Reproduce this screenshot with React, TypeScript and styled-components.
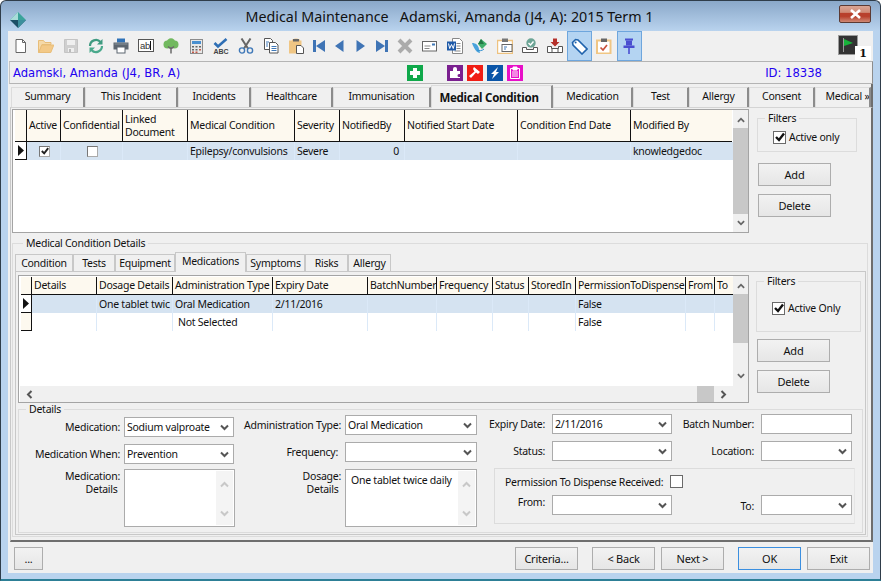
import React from 'react';
import styled, { createGlobalStyle } from 'styled-components';

const GlobalStyle = createGlobalStyle`
  html, body { margin: 0; padding: 0; background: #fff; }
  body { font-family: "Noto Sans", "Liberation Sans", sans-serif; font-size: 10.5px; letter-spacing: -0.25px; color: #111; }
  * { box-sizing: border-box; }
`;

const Window = styled.div`
  width: 881px;
  height: 581px;
  display: flex;
  flex-direction: column;
  border: 1px solid #2f3d4a;
  border-bottom: 2px solid #2d7f96;
  border-radius: 6px 6px 0 0;
  background: linear-gradient(#8aa8c9 0, #b9d3ee 30px, #b9d3ee 100%);
`;
const TitleBar = styled.div`
  height: 30px;
  flex: none;
  display: flex;
  align-items: center;
  padding: 0 9px;
`;
const Title = styled.div`
  flex: 1;
  text-align: center;
  padding-left: 34px;
  font-size: 14.3px;
  letter-spacing: 0;
  white-space: pre;
  color: #111;
`;
const CloseButton = styled.div`
  width: 32px;
  height: 18px;
  margin-top: -4px;
  border: 1px solid #5c3a33;
  border-radius: 2px;
  display: flex;
  align-items: center;
  justify-content: center;
  background: linear-gradient(#d9a594 0, #cf8a76 40%, #b8402c 45%, #b8402c 65%, #cf8a76 100%);
`;
const Client = styled.div`
  flex: 1;
  margin: 0 7px 6px;
  background: #f0f0f0;
  display: flex;
  flex-direction: column;
  min-height: 0;
`;

const Toolbar = styled.div`
  height: 30px;
  flex: none;
  display: flex;
  padding-left: 1px;
`;
const ToolButton = styled.div<{ $w?: number; $active?: boolean }>`
  width: ${(p) => p.$w ?? 25}px;
  display: flex;
  align-items: center;
  justify-content: center;
  border: 1px solid ${(p) => (p.$active ? '#6ea6dd' : 'transparent')};
  background: ${(p) => (p.$active ? '#b4d4f2' : 'transparent')};
`;
const FlagWrap = styled.div`
  position: relative;
  width: 20px;
  height: 20px;
  margin: 4px 15px 0 196px;
`;
const CountBadge = styled.div`
  position: absolute;
  left: 17px;
  top: 11px;
  width: 16px;
  height: 14px;
  background: #fff;
  font: bold 11px "DejaVu Serif", serif;
  text-align: center;
  line-height: 15px;
`;

const PatientBar = styled.div`
  height: 23px;
  flex: none;
  margin-left: 1px;
  display: flex;
  align-items: center;
  border-top: 1px solid #b4b4b4;
  border-bottom: 1px solid #b4b4b4;
  border-left: 1px solid #c4c4c4;
  border-right: 1px solid #8c8c8c;
  padding-left: 3px;
  font-family: "DejaVu Sans", sans-serif;
  font-size: 11.6px;
  letter-spacing: 0;
  color: #2200f0;
`;
const PatientName = styled.span`
  width: 394px;
`;
const AlertSquare = styled.span<{ $bg: string; $gap: number }>`
  width: 16px;
  height: 16px;
  margin-left: ${(p) => p.$gap}px;
  background: ${(p) => p.$bg};
  display: flex;
`;
const PatientId = styled.span`
  margin-left: auto;
  margin-right: 50px;
`;

const TabStrip = styled.div`
  height: 23px;
  flex: none;
  display: flex;
  align-items: flex-end;
  padding-left: 3px;
  border-right: 2px solid #6e6e6e;
`;
const MainTab = styled.div<{ $w: number; $active?: boolean; $indent?: number }>`
  width: ${(p) => p.$w}px;
  height: ${(p) => (p.$active ? 23 : 20)}px;
  margin-bottom: ${(p) => (p.$active ? -1 : 0)}px;
  position: relative;
  z-index: ${(p) => (p.$active ? 1 : 0)};
  display: flex;
  align-items: center;
  justify-content: center;
  overflow: hidden;
  white-space: nowrap;
  background: #f0f0f0;
  border-top: 1px solid #dcdcdc;
  border-left: 1px solid #dcdcdc;
  border-right: 2px solid #8c8c8c;
  font-size: ${(p) => (p.$active ? 11.5 : 10.5)}px;
  font-weight: ${(p) => (p.$active ? 700 : 400)};
  padding-bottom: ${(p) => (p.$active ? 0 : 3)}px;
  padding-left: ${(p) => p.$indent ?? 0}px;
  padding-right: ${(p) => (p.$active ? 5 : 0)}px;
`;
const MainPanel = styled.div`
  height: 435px;
  flex: none;
  margin-left: 2px;
  padding: 1px 0 0 1px;
  border-top: 1px solid #d4d4d4;
  border-left: 1px solid #c8c8c8;
  border-right: 2px solid #6e6e6e;
  border-bottom: 2px solid #6e6e6e;
`;
const SplitRow = styled.div`
  display: flex;
`;
const GridFrame = styled.div<{ $w: number; $h: number; $left: number }>`
  width: ${(p) => p.$w}px;
  height: ${(p) => p.$h}px;
  margin-left: ${(p) => p.$left}px;
  flex: none;
  display: flex;
  background: #fff;
  border: 1px solid #a4a4a4;
`;
const GridMain = styled.div`
  flex: 1;
  min-width: 0;
  display: flex;
  flex-direction: column;
`;
const GridBody = styled.div<{ $top: number }>`
  flex: 1;
  min-height: 0;
  padding: ${(p) => p.$top}px 0 0 2px;
  overflow: hidden;
`;
const GridRow = styled.div<{ $cols: number[]; $h: number; $selected?: boolean }>`
  display: grid;
  grid-template-columns: ${(p) => p.$cols.map((c) => `${c}px`).join(' ')};
  height: ${(p) => p.$h}px;
  background: ${(p) => (p.$selected ? '#d5e3f1' : 'transparent')};
`;
const HeadCell = styled.div`
  background: #fdf9ef;
  border-right: 1px solid #111;
  border-bottom: 1px solid #111;
  padding-left: 2px;
  display: flex;
  align-items: center;
  line-height: 13px;
  overflow: hidden;
  white-space: pre;
  &:last-child { border-right: none; }
`;
const RowHead = styled.div<{ $cream?: boolean }>`
  background: ${(p) => (p.$cream ? '#fdf9ef' : '#fff')};
  border-right: 1px solid #111;
  border-bottom: 1px solid #111;
  display: flex;
  align-items: center;
  justify-content: center;
`;
const Cell = styled.div<{ $align?: string; $pad?: number }>`
  border-right: 1px solid #dbe9f8;
  padding-left: ${(p) => p.$pad ?? 2}px;
  padding-right: ${(p) => (p.$align === 'right' ? 5 : 0)}px;
  display: flex;
  align-items: center;
  justify-content: ${(p) => (p.$align === 'right' ? 'flex-end' : p.$align === 'center' ? 'center' : 'flex-start')};
  overflow: hidden;
  white-space: nowrap;
  &:last-child { border-right: none; }
`;
const GridCheck = styled.span`
  width: 11px;
  height: 11px;
  background: #fff;
  border: 1px solid #aaa;
  border-top-color: #777;
  border-left-color: #777;
  display: flex;
  align-items: center;
  justify-content: center;
`;
const VScroll = styled.div<{ $thumb: number; $end: number }>`
  width: 15px;
  flex: none;
  display: flex;
  flex-direction: column;
  align-items: center;
  background: #f0f0f0;
  & > i {
    display: block;
    width: 15px;
    height: ${(p) => p.$thumb}px;
    margin-top: 4px;
    background: #c8c8c8;
  }
  & > svg:first-child { margin-top: 6px; }
  & > svg:last-child { margin-top: auto; margin-bottom: ${(p) => p.$end}px; }
`;
const HScroll = styled.div`
  height: 16px;
  flex: none;
  display: flex;
  align-items: center;
  background: #f0f0f0;
  margin-left: 1px;
  padding: 0 5px;
  & > i {
    display: block;
    width: 17px;
    height: 16px;
    margin-left: auto;
    margin-right: 5px;
    background: #c8c8c8;
  }
`;

const SidePane = styled.div<{ $left: number }>`
  margin-left: ${(p) => p.$left}px;
  display: flex;
  flex-direction: column;
`;
const Group = styled.fieldset<{ $w: number; $h: number; $mt?: number }>`
  width: ${(p) => p.$w}px;
  height: ${(p) => p.$h}px;
  margin: ${(p) => p.$mt ?? 0}px 0 0;
  padding: 0;
  border: 1px solid #dcdcdc;
  min-width: 0;
`;
const GroupTitle = styled.legend<{ $left?: number }>`
  padding: 0 3px;
  margin-left: ${(p) => p.$left ?? 7}px;
  line-height: 13px;
`;
const CheckLine = styled.label<{ $left: number; $top: number }>`
  display: flex;
  align-items: center;
  gap: 3px;
  margin: ${(p) => p.$top}px 0 0 ${(p) => p.$left}px;
`;
const BlackCheck = styled.span`
  width: 13px;
  height: 13px;
  background: #fff;
  border: 1px solid #6a6a6a;
  display: flex;
  align-items: center;
  justify-content: center;
`;
const PushButton = styled.div<{ $w?: number; $focus?: boolean }>`
  width: ${(p) => p.$w ?? 73}px;
  height: 23px;
  flex: none;
  display: flex;
  align-items: center;
  justify-content: center;
  border: 1px solid ${(p) => (p.$focus ? '#3b8fe0' : '#adadad')};
  background: linear-gradient(#f2f2f2, #e6e6e6);
  font-size: 11px;
`;
const SideButton = styled(PushButton)<{ $mt: number; $ml?: number }>`
  margin-top: ${(p) => p.$mt}px;
  margin-left: ${(p) => p.$ml ?? 0}px;
`;

const MainGroup = styled.fieldset`
  width: 856px;
  height: 300px;
  margin: 4px 0 0;
  padding: 2px 0 0 2px;
  border: 1px solid #dcdcdc;
  min-width: 0;
`;
const SubStrip = styled.div`
  height: 19px;
  display: flex;
  align-items: flex-end;
`;
const SubTab = styled.div<{ $w: number; $active?: boolean }>`
  width: ${(p) => p.$w}px;
  height: ${(p) => (p.$active ? 20 : 17)}px;
  margin-bottom: ${(p) => (p.$active ? -1 : 0)}px;
  position: relative;
  z-index: ${(p) => (p.$active ? 1 : 0)};
  display: flex;
  align-items: center;
  justify-content: center;
  background: #f0f0f0;
  border: 1px solid #c8c8c8;
  border-bottom: none;
  padding-bottom: ${(p) => (p.$active ? 3 : 0)}px;
`;
const SubPanel = styled.div`
  width: 851px;
  height: 264px;
  border: 1px solid #c8c8c8;
  padding-top: 3px;
`;

const DetailsGroup = styled.fieldset`
  width: 845px;
  height: 129px;
  margin: 1px 0 0 2px;
  padding: 0;
  border: 1px solid #dcdcdc;
  min-width: 0;
  display: flex;
`;
const DetailsLegend = styled.legend`
  padding: 0 3px;
  margin-left: 7px;
  line-height: 11px;
  height: 10px;
`;
const DetailsBody = styled.div`
  display: flex;
  align-items: flex-start;
`;
const Column = styled.div<{ $top: number; $left?: number }>`
  margin: ${(p) => p.$top}px 0 0 ${(p) => p.$left ?? 0}px;
  display: flex;
  flex-direction: column;
`;
const FieldRow = styled.div<{ $mt?: number }>`
  display: flex;
  margin-top: ${(p) => p.$mt ?? 0}px;
`;
const FieldLabel = styled.div<{ $w: number; $gap: number; $inset?: number; $lift?: number; $drop?: number }>`
  width: ${(p) => p.$w}px;
  margin-right: ${(p) => p.$gap}px;
  padding-right: ${(p) => p.$inset ?? 0}px;
  padding-bottom: ${(p) => p.$lift ?? 0}px;
  padding-top: ${(p) => p.$drop ?? 0}px;
  flex: none;
  display: flex;
  align-items: center;
  justify-content: flex-end;
  text-align: right;
  white-space: nowrap;
`;
const MultiLabel = styled(FieldLabel)`
  display: block;
  line-height: 13px;
  padding-top: 1px;
`;
const Combo = styled.div<{ $w: number }>`
  width: ${(p) => p.$w}px;
  height: 20px;
  flex: none;
  display: flex;
  align-items: center;
  justify-content: space-between;
  background: #fff;
  border: 1px solid #ababab;
  padding: 0 4px 0 2px;
`;
const TextBox = styled.div<{ $w: number }>`
  width: ${(p) => p.$w}px;
  height: 20px;
  flex: none;
  background: #fff;
  border: 1px solid #ababab;
`;
const MemoBox = styled.div<{ $w: number }>`
  width: ${(p) => p.$w}px;
  height: 58px;
  flex: none;
  display: flex;
  justify-content: space-between;
  background: #fff;
  border: 1px solid #ababab;
`;
const MemoText = styled.div`
  padding: 3px 0 0 5px;
  white-space: nowrap;
`;
const MemoScroll = styled.div`
  width: 17px;
  flex: none;
  margin: 1px;
  background: #f4f4f4;
  display: flex;
  flex-direction: column;
  justify-content: space-between;
  align-items: center;
  padding: 9px 0 7px;
`;
const PermissionBox = styled.div`
  width: 361px;
  height: 56px;
  margin: 7px 0 0 14px;
  border: 1px solid #dcdcdc;
  border-right-color: #e6e6e6;
`;
const PermissionLine = styled.div`
  display: flex;
  align-items: center;
  gap: 7px;
  padding: 5px 0 0 10px;
  height: 20px;
`;
const PlainCheck = styled.span`
  width: 13px;
  height: 13px;
  background: #fff;
  border: 1px solid #6a6a6a;
`;
const PermissionFields = styled.div`
  display: flex;
  margin-top: 6px;
`;

const Footer = styled.div`
  flex: 1;
  display: flex;
  align-items: flex-start;
  padding: 5px 0 0 6px;
`;
const FooterButton = styled(PushButton)<{ $ml: number }>`
  margin-left: ${(p) => p.$ml}px;
`;

const Chevron = ({ color = '#555', up = false, size = 9 }: { color?: string; up?: boolean; size?: number }) => (
  <svg width={size} height={size} viewBox="0 0 9 9" style={{ flex: 'none' }}>
    <path d={up ? 'M1 6.5 L4.5 3 L8 6.5' : 'M1 2.5 L4.5 6 L8 2.5'} fill="none" stroke={color} strokeWidth="2" />
  </svg>
);
const ChevronSide = ({ left = false }: { left?: boolean }) => (
  <svg width="9" height="9" viewBox="0 0 9 9">
    <path d={left ? 'M6.5 1 L3 4.5 L6.5 8' : 'M2.5 1 L6 4.5 L2.5 8'} fill="none" stroke="#555" strokeWidth="2" />
  </svg>
);
const RowArrow = () => (
  <svg width="6" height="11" viewBox="0 0 6 11">
    <path d="M0 0 L6 5.5 L0 11 Z" fill="#111" />
  </svg>
);
const Tick = ({ size = 9, color = '#222' }: { size?: number; color?: string }) => (
  <svg width={size} height={size} viewBox="0 0 10 10">
    <path d="M1 5 L4 8 L9 1.5" fill="none" stroke={color} strokeWidth="2.4" />
  </svg>
);

const Ico = ({ w = 16, h = 16, children }: { w?: number; h?: number; children: React.ReactNode }) => (
  <svg width={w} height={h} viewBox={`0 0 ${w} ${h}`}>
    {children}
  </svg>
);

const toolIcons: { w?: number; active?: boolean; icon: React.ReactNode }[] = [
  { icon: <Ico><path d="M3 1.5h6.5l3 3v10h-9.5z" fill="#fff" stroke="#666" /><path d="M9.5 1.5v3h3" fill="none" stroke="#666" /></Ico> },
  { icon: <Ico><path d="M0.5 14.5v-12h5l1.5 2h6v2h-9l-3 8z" fill="#f5d9a8" stroke="#e8bd78" /><path d="M0.8 14.5l3-7.5h12l-3 7.5z" fill="#f3c987" stroke="#e8bd78" /></Ico> },
  { icon: <Ico><path d="M1.5 1.5h13v13h-13z" fill="#cfcfcf" stroke="#c4c4c4" /><rect x="4" y="2" width="8" height="5" fill="#efefef" /><rect x="5" y="10" width="6" height="4" fill="#efefef" /><rect x="6" y="11" width="2" height="3" fill="#bbb" /></Ico> },
  { icon: <Ico><path d="M2 8a6 6 0 0 1 10.5-4" fill="none" stroke="#3f9a80" strokeWidth="2.2" /><path d="M14.5 1v5.5h-5.5z" fill="#3f9a80" /><path d="M14 8a6 6 0 0 1-10.5 4" fill="none" stroke="#4aa98c" strokeWidth="2.2" /><path d="M1.5 15v-5.5h5.5z" fill="#4aa98c" /></Ico> },
  { icon: <Ico><rect x="4" y="0.5" width="8" height="4" fill="#2f72b8" /><rect x="0.5" y="4.5" width="15" height="7" fill="#5d6670" /><rect x="1.5" y="5.5" width="13" height="1" fill="#8a939c" /><rect x="4" y="9" width="8" height="6" fill="#fff" stroke="#5d6670" /></Ico> },
  { icon: <Ico h={14}><rect x="0.5" y="0.5" width="15" height="12" fill="#fff" stroke="#555" /><text x="2" y="10" fontSize="9.5" fontFamily="Liberation Sans, sans-serif" fill="#333">ab</text><rect x="12" y="2" width="1" height="9" fill="#111" /></Ico> },
  { icon: <Ico><circle cx="4.5" cy="6.5" r="4" fill="#72b95f" /><circle cx="11.5" cy="6.5" r="4" fill="#72b95f" /><circle cx="8" cy="4.5" r="4.2" fill="#72b95f" /><path d="M8 15.5V9M8 11L5 8.5M8 11l3-2.5" fill="none" stroke="#6a6a6a" strokeWidth="1.5" /></Ico> },
  { icon: <Ico w={13} h={15}><rect x="0.5" y="0.5" width="12" height="14" fill="#e8e8e8" stroke="#8c8c8c" /><rect x="2" y="2" width="9" height="3" fill="#4a90d0" /><path d="M2 7h2v1.5H2zM5.5 7h2v1.5h-2zM9 7h2v1.5H9zM2 10h2v1.5H2zM5.5 10h2v1.5h-2z" fill="#666" /><path d="M9 10h2v1.5H9zM2 12.5h2V14H2zM5.5 12.5h2V14h-2z" fill="#c25a4a" /></Ico> },
  { icon: <Ico h={16}><path d="M1.5 5l3.5 3.5L13.5 1" fill="none" stroke="#2f6fb5" strokeWidth="2.6" /><text x="0.5" y="15.5" fontSize="7" fontWeight="700" letterSpacing="0" fontFamily="Liberation Sans, sans-serif" fill="#444">ABC</text></Ico> },
  { icon: <Ico><path d="M3.5 0.5L10 10.5M12.5 0.5L6 10.5" stroke="#666" strokeWidth="2" fill="none" /><circle cx="4" cy="12.5" r="2.6" fill="none" stroke="#3f78b8" strokeWidth="1.4" /><circle cx="12" cy="12.5" r="2.6" fill="none" stroke="#3f78b8" strokeWidth="1.4" /></Ico> },
  { icon: <Ico><path d="M1.5 0.5h6l2 2v9h-8z" fill="#fff" stroke="#555" /><path d="M6.5 4.5h6l2.5 2.5v8h-8.5z" fill="#fff" stroke="#555" /><path d="M3 4h3M3 6h2M3 8h2M8.5 8.5h5M8.5 10.5h5M8.5 12.5h5" stroke="#3f78b8" /></Ico> },
  { icon: <Ico><path d="M1 2.5h3v-1h1.5a2.5 1 0 0 1 5 0H12v1h1.5V8H8v7.5H1z" fill="#f0c684" /><rect x="5" y="1" width="6" height="2.5" fill="#666" /><path d="M8.5 7.5h4.5l2.5 2.5v5.5h-7z" fill="#fff" stroke="#555" /></Ico> },
  { w: 21, icon: <Ico w={12} h={12}><rect x="0" y="0" width="3" height="12" fill="#3f74b5" /><path d="M12 0v12L3 6z" fill="#3f74b5" /></Ico> },
  { w: 21, icon: <Ico w={9} h={12}><path d="M8.5 0v12L0 6z" fill="#3f74b5" /></Ico> },
  { w: 21, icon: <Ico w={9} h={12}><path d="M0.5 0v12L9 6z" fill="#3f74b5" /></Ico> },
  { w: 21, icon: <Ico w={12} h={12}><rect x="9" y="0" width="3" height="12" fill="#3f74b5" /><path d="M0 0v12l9-6z" fill="#3f74b5" /></Ico> },
  { icon: <Ico><path d="M2 2l12 12M14 2L2 14" stroke="#ababab" strokeWidth="4" /></Ico> },
  { icon: <Ico w={15} h={12}><rect x="0.5" y="1.5" width="14" height="9.5" fill="#fff" stroke="#666" /><path d="M2.5 6h6M2.5 8.5h5" stroke="#888" /><rect x="10" y="3.5" width="3" height="2" fill="#3f78b8" /></Ico> },
  { icon: <Ico><path d="M5.5 0.5h7l3 3v12h-10z" fill="#fff" stroke="#888" /><path d="M9.5 5.5h4M9.5 8h4M9.5 10.5h4M7.5 13h6" stroke="#888" /><rect x="0" y="3.5" width="9" height="9" fill="#1f5aa8" /><path d="M1.5 5.5l1.2 5 1.8-4 1.8 4 1.2-5" fill="none" stroke="#fff" /></Ico> },
  { icon: <Ico><path d="M0 5c4 0 6 2 7 6l1 4c-3 0-6-4-8-10z" fill="#49a2dc" /><path d="M9 1l6 5-5 5-4-5z" fill="#3fae6a" /><path d="M9 1l3 5-6 0z" fill="#237a46" /><path d="M5 12c2 1 5 1 7-1" stroke="#2f8fd0" fill="none" /></Ico> },
  { icon: <Ico><path d="M0.5 2.5h15v13h-15z" fill="#fff" stroke="#eec27f" strokeWidth="1.4" /><rect x="5" y="0.5" width="6" height="3.5" fill="#777" /><rect x="5" y="6.5" width="10" height="7" fill="#fff" stroke="#666" /><path d="M7 9h3M7 11h2" stroke="#3f78b8" /></Ico> },
  { icon: <Ico><circle cx="9" cy="5" r="4.7" fill="#6da596" /><path d="M6.5 5l2 2 3-3.5" fill="none" stroke="#fff" strokeWidth="1.4" /><path d="M0.5 9.5h4v2h7v-2h4v5h-15z" fill="#fff" stroke="#555" /></Ico> },
  { icon: <Ico><path d="M6 0.5h4v3.5h2.5L8 8.5 3.5 4H6z" fill="#b5302a" /><path d="M0.5 8.5h4v2h7v-2h4v6h-15z" fill="#fff" stroke="#555" /><path d="M5 10.5v4M11 10.5v4" stroke="#555" /></Ico> },
  { active: true, icon: <svg width="17" height="17" viewBox="0 0 17 17"><path d="M1.5 4.5l3-3 2.5.5 9 9-5 5-9-9z" fill="#fff" stroke="#1f63ad" strokeWidth="1.6" /><circle cx="4.6" cy="4.6" r="1" fill="#1f63ad" /></svg> },
  { icon: <Ico><rect x="1" y="2.5" width="13.5" height="13" fill="#fff" stroke="#f0c684" strokeWidth="2" /><rect x="5" y="0.5" width="6" height="3.5" fill="#666" /><path d="M4.5 9.5l2.5 2.5 4-5" fill="none" stroke="#c9523b" strokeWidth="1.7" /></Ico> },
  { active: true, icon: <Ico><rect x="4" y="0.5" width="8" height="2" fill="#4a4fd0" /><rect x="5" y="2.5" width="6" height="5" fill="#4a4fd0" /><rect x="2.5" y="7.5" width="11" height="2.5" fill="#4a4fd0" /><rect x="7.2" y="10" width="1.6" height="6" fill="#4a4fd0" /></Ico> },
];

const mainTabs: [string, number][] = [
  ['Summary', 74], ['This Incident', 93], ['Incidents', 73], ['Healthcare', 82], ['Immunisation', 98],
  ['Medical Condition', 122], ['Medication', 80], ['Test', 56], ['Allergy', 60], ['Consent', 66], ['Medical »', 56],
];
const subTabs: [string, number][] = [
  ['Condition', 58], ['Tests', 42], ['Equipment', 60], ['Medications', 71], ['Symptoms', 59], ['Risks', 43], ['Allergy', 43],
];

const upperCols = [12, 34, 62, 65, 107, 45, 65, 113, 113, 101];
const upperHead = ['Active', 'Confidential', 'Linked\nDocument', 'Medical Condition', 'Severity', 'NotifiedBy', 'Notified Start Date', 'Condition End Date', 'Modified By'];
const lowerCols = [11, 65, 76, 100, 95, 69, 56, 36, 47, 110, 29, 18];
const lowerHead = ['Details', 'Dosage Details', 'Administration Type', 'Expiry Date', 'BatchNumber', 'Frequency', 'Status', 'StoredIn', 'PermissionToDispense', 'From', 'To'];
const lowerRows = [
  ['', 'One tablet twic', 'Oral Medication', '2/11/2016', '', '', '', '', 'False', '', ''],
  ['', '', 'Not Selected', '', '', '', '', '', 'False', '', ''],
];

export default function App() {
  return (
    <Window>
      <GlobalStyle />
      <TitleBar>
        <svg width="16" height="16" viewBox="0 0 16 16" style={{ marginTop: 8 }}>
          <path d="M8 0L16 8H0z" fill="#3aa39a" />
          <path d="M8 16L16 8H0z" fill="#1c4f66" />
          <path d="M8 0L0 8h8z" fill="#a8dcd8" />
          <path d="M8 16l8-8H8z" fill="#3c8f9c" />
        </svg>
        <Title>{'Medical Maintenance   Adamski, Amanda (J4, A): 2015 Term 1'}</Title>
        <CloseButton>
          <svg width="13" height="10" viewBox="0 0 13 10">
            <path d="M2 1l9 8M11 1L2 9" stroke="#fff" strokeWidth="2.6" />
          </svg>
        </CloseButton>
      </TitleBar>
      <Client>
        <Toolbar>
          {toolIcons.map((t, i) => (
            <ToolButton key={i} $w={t.w} $active={t.active}>
              {t.icon}
            </ToolButton>
          ))}
          <FlagWrap>
            <svg width="20" height="20" viewBox="0 0 20 20">
              <rect x="0.5" y="0.5" width="19" height="19" fill="#333" stroke="#9c9c9c" />
              <rect x="5" y="3" width="1" height="14" fill="#999" />
              <path d="M6 4l9 4-9 3z" fill="#17b33a" />
            </svg>
            <CountBadge>1</CountBadge>
          </FlagWrap>
        </Toolbar>
        <PatientBar>
          <PatientName>Adamski, Amanda (J4, BR, A)</PatientName>
          <AlertSquare $bg="#0fa84a" $gap={0}>
            <svg width="16" height="16" viewBox="0 0 16 16"><path d="M6 3h4v3h3v4h-3v3H6v-3H3V6h3z" fill="#fff" /></svg>
          </AlertSquare>
          <AlertSquare $bg="#7a1f8f" $gap={24}>
            <svg width="16" height="16" viewBox="0 0 16 16"><path d="M3 6h3V4a2 2 0 0 1 4 0v2h3v3h-1a1.5 1.5 0 0 0 0 3h1v1H3z" fill="#fff" /></svg>
          </AlertSquare>
          <AlertSquare $bg="#f01d14" $gap={4}>
            <svg width="16" height="16" viewBox="0 0 16 16"><path d="M7 2l6 5-2 2-2-1.5L4 13l-2-2 5.5-4.5L6 4z" fill="#fff" /></svg>
          </AlertSquare>
          <AlertSquare $bg="#0a55a8" $gap={4}>
            <svg width="16" height="16" viewBox="0 0 16 16"><path d="M11 2L4 9h3l-2 5 7-7H9z" fill="#fff" /></svg>
          </AlertSquare>
          <AlertSquare $bg="#e80fc8" $gap={4}>
            <svg width="16" height="16" viewBox="0 0 16 16"><path d="M3.5 3.5h9v10h-9z" fill="none" stroke="#fff" /><path d="M6 2h4v3H6zM5 7h6M5 9h6M5 11h6" fill="#fff" stroke="#fff" /></svg>
          </AlertSquare>
          <PatientId>ID: 18338</PatientId>
        </PatientBar>
        <TabStrip>
          {mainTabs.map(([label, w]) => (
            <MainTab key={label} $w={w} $active={label === 'Medical Condition'} $indent={label === 'Medical »' ? 10 : 0}>
              {label}
            </MainTab>
          ))}
        </TabStrip>
        <MainPanel>
          <SplitRow>
            <GridFrame $w={737} $h={124} $left={0}>
              <GridBody $top={0}>
                <GridRow $cols={upperCols} $h={32}>
                  <HeadCell />
                  {upperHead.map((h) => (
                    <HeadCell key={h}>{h}</HeadCell>
                  ))}
                </GridRow>
                <GridRow $cols={upperCols} $h={18} $selected>
                  <RowHead><RowArrow /></RowHead>
                  <Cell $align="center"><GridCheck><Tick size={8} /></GridCheck></Cell>
                  <Cell $align="center"><GridCheck /></Cell>
                  <Cell />
                  <Cell>Epilepsy/convulsions</Cell>
                  <Cell>Severe</Cell>
                  <Cell $align="right">0</Cell>
                  <Cell />
                  <Cell />
                  <Cell>knowledgedoc</Cell>
                </GridRow>
              </GridBody>
              <VScroll $thumb={86} $end={5}>
                <Chevron color="#666" up size={8} />
                <i />
                <Chevron color="#666" size={8} />
              </VScroll>
            </GridFrame>
            <SidePane $left={8}>
              <Group $w={100} $h={40} $mt={3}>
                <GroupTitle>Filters</GroupTitle>
                <CheckLine $left={15} $top={5}>
                  <BlackCheck><Tick size={10} color="#111" /></BlackCheck>
                  Active only
                </CheckLine>
              </Group>
              <SideButton $mt={11} $ml={1}>Add</SideButton>
              <SideButton $mt={8} $ml={1}>Delete</SideButton>
            </SidePane>
          </SplitRow>
          <MainGroup>
            <GroupTitle $left={8}>Medical Condition Details</GroupTitle>
            <SubStrip>
              {subTabs.map(([label, w]) => (
                <SubTab key={label} $w={w} $active={label === 'Medications'}>
                  {label}
                </SubTab>
              ))}
            </SubStrip>
            <SubPanel>
              <SplitRow>
                <GridFrame $w={731} $h={128} $left={2}>
                  <GridMain>
                    <GridBody $top={1}>
                      <GridRow $cols={lowerCols} $h={18}>
                        <HeadCell />
                        {lowerHead.map((h) => (
                          <HeadCell key={h}>{h}</HeadCell>
                        ))}
                      </GridRow>
                      {lowerRows.map((row, i) => (
                        <GridRow key={i} $cols={lowerCols} $h={18} $selected={i === 0}>
                          <RowHead $cream={i === 1}>{i === 0 && <RowArrow />}</RowHead>
                          {row.map((c, j) => (
                            <Cell key={j} $pad={c === 'Not Selected' ? 5 : 2}>{c}</Cell>
                          ))}
                        </GridRow>
                      ))}
                    </GridBody>
                    <HScroll>
                      <ChevronSide left />
                      <i />
                      <ChevronSide />
                    </HScroll>
                  </GridMain>
                  <VScroll $thumb={49} $end={22}>
                    <Chevron color="#666" up size={8} />
                    <i />
                    <Chevron color="#666" size={8} />
                  </VScroll>
                </GridFrame>
                <SidePane $left={7}>
                  <Group $w={105} $h={57}>
                    <GroupTitle>Filters</GroupTitle>
                    <CheckLine $left={15} $top={13}>
                      <BlackCheck><Tick size={10} color="#111" /></BlackCheck>
                      Active Only
                    </CheckLine>
                  </Group>
                  <SideButton $mt={7} $ml={1}>Add</SideButton>
                  <SideButton $mt={8} $ml={1}>Delete</SideButton>
                </SidePane>
              </SplitRow>
              <DetailsGroup>
                <DetailsLegend>Details</DetailsLegend>
                <DetailsBody>
                  <Column $top={3}>
                    <FieldRow>
                      <FieldLabel $w={101} $gap={4}>Medication:</FieldLabel>
                      <Combo $w={110}>Sodium valproate<Chevron /></Combo>
                    </FieldRow>
                    <FieldRow $mt={7}>
                      <FieldLabel $w={101} $gap={4}>Medication When:</FieldLabel>
                      <Combo $w={110}>Prevention<Chevron /></Combo>
                    </FieldRow>
                    <FieldRow $mt={5}>
                      <MultiLabel $w={101} $gap={4}>Medication:<br />Details&nbsp;</MultiLabel>
                      <MemoBox $w={111}>
                        <MemoText />
                        <MemoScroll><Chevron color="#c8c8c8" up /><Chevron color="#c8c8c8" /></MemoScroll>
                      </MemoBox>
                    </FieldRow>
                  </Column>
                  <Column $top={1} $left={3}>
                    <FieldRow>
                      <FieldLabel $w={103} $gap={4}>Administration Type:</FieldLabel>
                      <Combo $w={132}>Oral Medication<Chevron /></Combo>
                    </FieldRow>
                    <FieldRow $mt={7}>
                      <FieldLabel $w={103} $gap={4} $inset={3}>Frequency:</FieldLabel>
                      <Combo $w={132}><span /><Chevron /></Combo>
                    </FieldRow>
                    <FieldRow $mt={7}>
                      <MultiLabel $w={103} $gap={4}>Dosage:<br />Details&nbsp;</MultiLabel>
                      <MemoBox $w={132}>
                        <MemoText>One tablet twice daily</MemoText>
                        <MemoScroll><Chevron color="#c8c8c8" up /><Chevron color="#c8c8c8" /></MemoScroll>
                      </MemoBox>
                    </FieldRow>
                  </Column>
                  <Column $top={0} $left={3}>
                    <FieldRow>
                      <FieldLabel $w={65} $gap={7}>Expiry Date:</FieldLabel>
                      <Combo $w={120}>2/11/2016<Chevron /></Combo>
                      <FieldLabel $w={82} $gap={7}>Batch Number:</FieldLabel>
                      <TextBox $w={91} />
                    </FieldRow>
                    <FieldRow $mt={7}>
                      <FieldLabel $w={65} $gap={7}>Status:</FieldLabel>
                      <Combo $w={120}><span /><Chevron /></Combo>
                      <FieldLabel $w={82} $gap={7}>Location:</FieldLabel>
                      <Combo $w={91}><span /><Chevron /></Combo>
                    </FieldRow>
                    <PermissionBox>
                      <PermissionLine>
                        Permission To Dispense Received:
                        <PlainCheck />
                      </PermissionLine>
                      <PermissionFields>
                        <FieldLabel $w={50} $gap={7} $lift={6}>From:</FieldLabel>
                        <Combo $w={120}><span /><Chevron /></Combo>
                        <FieldLabel $w={82} $gap={7} $drop={2}>To:</FieldLabel>
                        <Combo $w={91}><span /><Chevron /></Combo>
                      </PermissionFields>
                    </PermissionBox>
                  </Column>
                </DetailsBody>
              </DetailsGroup>
            </SubPanel>
          </MainGroup>
        </MainPanel>
        <Footer>
          <PushButton $w={29}>...</PushButton>
          <FooterButton $w={63} $ml={472}>Criteria...</FooterButton>
          <FooterButton $w={63} $ml={14}>{'< Back'}</FooterButton>
          <FooterButton $w={63} $ml={6}>{'Next >'}</FooterButton>
          <FooterButton $w={63} $ml={14} $focus>OK</FooterButton>
          <FooterButton $w={63} $ml={6}>Exit</FooterButton>
        </Footer>
      </Client>
    </Window>
  );
}
